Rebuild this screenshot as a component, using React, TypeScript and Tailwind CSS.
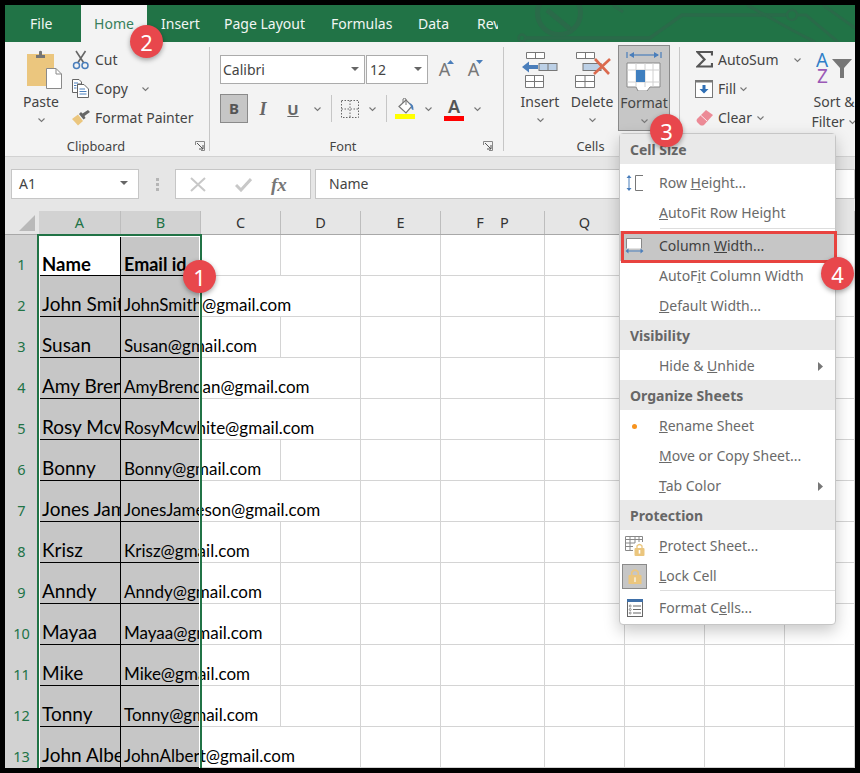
import React from "react";

const ui = "font-['Noto_Sans','Open_Sans',sans-serif]";

function Chev({ className = "" }: { className?: string }) {
  return (
    <svg width="9" height="6" viewBox="0 0 9 6" className={`shrink-0 ${className}`}>
      <path d="M1.5 1.5 L4.5 4.5 L7.5 1.5" fill="none" stroke="#777" strokeWidth="1.1" />
    </svg>
  );
}

function Caret() {
  return (
    <svg width="9" height="5" viewBox="0 0 9 5" className="shrink-0">
      <path d="M0 0 H8 L4 4 Z" fill="#666" />
    </svg>
  );
}

function Launcher({ gap }: { gap: number }) {
  return (
    <svg width="10" height="10" viewBox="0 0 10 10" className="shrink-0" style={{ marginLeft: gap }}>
      <path d="M0.5 4 V0.5 H9.5 V9.5 H6" fill="none" stroke="#888" />
      <path d="M2 2 L8 8 M8 4 V8 H4" fill="none" stroke="#555" />
    </svg>
  );
}

function PasteIcon() {
  return (
    <svg width="36" height="40" viewBox="0 0 36 40" className="ml-[8px]">
      <rect x="0" y="4" width="27" height="32" fill="#EBC67E" />
      <path d="M9 5 H12 V1.5 Q13.5 0 15 1.5 V5 H18 V8 H9 Z" fill="#757575" />
      <path d="M19.5 18.5 H29 L34.5 24 V38.5 H19.5 Z" fill="#fff" stroke="#8a8a8a" />
      <path d="M29 18.5 V24 H34.5" fill="none" stroke="#8a8a8a" />
    </svg>
  );
}

function ScissorsIcon() {
  return (
    <svg width="18" height="20" viewBox="0 0 18 20">
      <path d="M4 1 L11.5 12.5 M13.5 1 L6 12.5" stroke="#666" strokeWidth="1.6" fill="none" />
      <circle cx="4.5" cy="15.5" r="3" fill="none" stroke="#4a7ebb" strokeWidth="1.5" />
      <circle cx="13" cy="15.5" r="3" fill="none" stroke="#4a7ebb" strokeWidth="1.5" />
    </svg>
  );
}

function CopyIcon() {
  return (
    <svg width="18" height="19" viewBox="0 0 18 19">
      <path d="M0.5 0.5 H7 L9.5 3 V5 H5.5 V13.5 H0.5 Z" fill="#fff" stroke="#666" />
      <path d="M5.5 5.5 H12 L16.5 10 V18.5 H5.5 Z" fill="#fff" stroke="#666" />
      <path d="M2 4 H6 M2 6.5 H4.5 M2 9 H4.5 M7.5 10 H13 M7.5 12.5 H14.5 M7.5 15 H14.5" stroke="#4a7ebb" />
    </svg>
  );
}

function PainterIcon() {
  return (
    <svg width="19" height="16" viewBox="0 0 19 16">
      <path d="M0 9 L6 4.5 L11 11 L6 15.5 Q3 12 0 9 Z" fill="#EBC67E" />
      <path d="M7 4 L11.5 9.5 L13.5 8 L12.5 6 L18 2 L16 0 L10.5 3.5 L9 2 Z" fill="#666" />
    </svg>
  );
}

function BordersIcon() {
  return (
    <svg width="18" height="18" viewBox="0 0 18 18">
      <path d="M0.5 0.5 H17.5 V17.5 H0.5 Z M9 0.5 V17.5 M0.5 9 H17.5" fill="none" stroke="#666" strokeDasharray="1.5 1.5" />
    </svg>
  );
}

function FillIcon() {
  return (
    <svg width="20" height="22" viewBox="0 0 20 22">
      <path d="M4 8.5 L11 2 L17 8 L11 15 Z" fill="#fff" stroke="#777" strokeWidth="1.2" />
      <path d="M8 5 V1 Q9.5 -0.5 11 1 V7" fill="none" stroke="#777" />
      <path d="M14 5 Q19 6 18.5 12 Q16 12 16 8 Z" fill="#4a7ebb" />
      <rect x="0" y="16" width="20" height="5" fill="#ffff00" />
    </svg>
  );
}

function InsertIcon() {
  return (
    <svg width="36" height="36" viewBox="0 0 36 36">
      <path d="M4.5 0.5 H22.5 V6.5 H4.5 Z M13.5 0.5 V6.5" fill="#fff" stroke="#777" />
      <rect x="17" y="11.5" width="18" height="7" fill="#bcd0e6" stroke="#777" />
      <path d="M26 11.5 V18.5" stroke="#777" />
      <path d="M0 15 L7 9.5 V13 H16 V17 H7 V20.5 Z" fill="#4a7ebb" />
      <path d="M3.5 23.5 H21.5 V35.5 H3.5 Z M12.5 23.5 V35.5 M3.5 29.5 H21.5" fill="#fff" stroke="#777" />
    </svg>
  );
}

function DeleteIcon() {
  return (
    <svg width="38" height="36" viewBox="0 0 38 36" className="ml-[3px]">
      <path d="M1.5 0.5 H19.5 V6.5 H1.5 Z M10.5 0.5 V6.5" fill="#fff" stroke="#777" />
      <rect x="8" y="11.5" width="18" height="7" fill="#bcd0e6" stroke="#777" />
      <path d="M0.5 23.5 H19.5 V35.5 H0.5 Z M10 23.5 V35.5 M0.5 29.5 H19.5" fill="#fff" stroke="#777" />
      <path d="M20 7 L34 22 M35 7 L19 22" stroke="#DB6A4E" strokeWidth="2.6" />
    </svg>
  );
}

function FormatIcon() {
  return (
    <svg width="36" height="40" viewBox="0 0 36 40">
      <path d="M1 1 V7 M35 1 V7" stroke="#4a7ebb" strokeWidth="1.2" />
      <path d="M4 4 H32" stroke="#4a7ebb" strokeWidth="1.2" />
      <path d="M8 1 L3 4 L8 7 Z M28 1 L33 4 L28 7 Z" fill="#4a7ebb" />
      <path d="M1 12 H34 V36 L24 36 L21 40 L12 40 L10 36 L1 36 Z" fill="#fff" stroke="#888" />
      <path d="M1 19 H34 M1 31 H34 M10 12 V36 M19 12 V36 M27 12 V36" stroke="#d0d0d0" />
      <rect x="10" y="19" width="9" height="12" fill="#3f7fbf" />
    </svg>
  );
}

function SigmaIcon() {
  return (
    <svg width="17" height="17" viewBox="0 0 17 17">
      <path d="M16 4.5 V1 H1.5 L8.5 8.5 L1.5 15.5 H16 V12" fill="none" stroke="#555" strokeWidth="2.2" />
    </svg>
  );
}

function FillDownIcon() {
  return (
    <svg width="18" height="18" viewBox="0 0 18 18">
      <rect x="0.5" y="0.5" width="17" height="17" fill="#fff" stroke="#777" />
      <rect x="0.5" y="0.5" width="17" height="2" fill="#777" />
      <path d="M9 13.5 L4.5 9 H7.5 V5 H10.5 V9 H13.5 Z" fill="#2f6fb5" />
    </svg>
  );
}

function EraserIcon() {
  return (
    <svg width="17" height="16" viewBox="0 0 17 16">
      <path d="M10 0 L17 5 L8 15 Q6 16 4 15 L1 12 Q0 10 1 9 Z" fill="#EC8A96" />
      <path d="M4.5 5 L11 11" stroke="#fff" strokeWidth="0.8" />
    </svg>
  );
}

function SortIcon() {
  return (
    <svg width="37" height="33" viewBox="0 0 37 33" className="shrink-0">
      <text x="0" y="16" fontSize="19" fontFamily="'Noto Sans',sans-serif" fill="#2f7fc8">A</text>
      <text x="1" y="32" fontSize="19" fontFamily="'Noto Sans',sans-serif" fill="#9b59b6">Z</text>
      <path d="M16 8 H36 L28 17 V27 H24 V17 Z" fill="#777" />
    </svg>
  );
}

function MenuRowHeightIcon() {
  return (
    <svg width="18" height="18" viewBox="0 0 18 18">
      <path d="M3 2 V16" stroke="#4a7ebb" />
      <path d="M0.5 4 L3 1 L5.5 4 Z M0.5 14 L3 17 L5.5 14 Z" fill="#4a7ebb" />
      <path d="M17 1.5 H9.5 V16.5 H17" fill="none" stroke="#777" />
    </svg>
  );
}

function MenuColWidthIcon() {
  return (
    <svg width="19" height="16" viewBox="0 0 19 16">
      <rect x="1.5" y="0.5" width="15" height="10" fill="#fff" />
      <path d="M1.5 10.5 V0.5 H16.5 V10.5" fill="none" stroke="#888" />
      <path d="M2 13 H17" stroke="#4a7ebb" />
      <path d="M3.5 10.5 L0.5 13 L3.5 15.5 Z M15.5 10.5 L18.5 13 L15.5 15.5 Z" fill="#4a7ebb" />
    </svg>
  );
}

function MenuLock({ size = 16 }: { size?: number }) {
  return (
    <svg width={size} height={size * 1.2} viewBox="0 0 15 18">
      <path d="M4 8 V4.5 Q7.5 0 11 4.5 V8" fill="none" stroke="#EBC67E" strokeWidth="1.8" />
      <rect x="0.5" y="7.5" width="14" height="10" rx="1" fill="#EBC67E" />
      <rect x="6.5" y="10" width="2" height="5" fill="#fff" opacity="0.6" />
    </svg>
  );
}

function ProtectIcon() {
  return (
    <svg width="20" height="20" viewBox="0 0 20 20" className="shrink-0">
      <path d="M0.5 0.5 H17.5 V6 M0.5 0.5 V14.5 H8 M0.5 3.5 H17.5 M0.5 7 H10 M0.5 10.5 H8 M5 0.5 V14.5 M10 0.5 V7 M14 0.5 V6" fill="none" stroke="#888" />
      <g transform="translate(9.5,7)">
        <path d="M2.5 5 V3 Q5 0 7.5 3 V5" fill="none" stroke="#EBC67E" strokeWidth="1.3" />
        <rect x="0" y="5" width="10" height="8" rx="1" fill="#EBC67E" />
        <rect x="4.2" y="7" width="1.6" height="3.6" fill="#fff" />
      </g>
    </svg>
  );
}

function FormatCellsIcon() {
  return (
    <svg width="16" height="18" viewBox="0 0 16 18">
      <rect x="0.5" y="0.5" width="15" height="17" fill="#fff" stroke="#666" />
      <rect x="0" y="0" width="16" height="3" fill="#3e6fa8" />
      <path d="M6 7 H14 M6 10.5 H14 M6 14 H14" stroke="#666" />
      <circle cx="3.2" cy="7" r="1" fill="none" stroke="#666" strokeWidth="0.7" />
      <circle cx="3.2" cy="10.5" r="1" fill="none" stroke="#666" strokeWidth="0.7" />
      <circle cx="3.2" cy="14" r="1" fill="none" stroke="#666" strokeWidth="0.7" />
    </svg>
  );
}

function CircuitPattern() {
  return (
    <svg className="pointer-events-none absolute left-[485px] top-0" width="365" height="37" viewBox="0 0 365 37">
      <g fill="none" stroke="#2a6a49">
        <circle cx="69" cy="8" r="21.5" strokeWidth="5" />
        <path d="M57 5 L80 24" strokeWidth="5" />
        <circle cx="32" cy="33" r="3.5" strokeWidth="2.5" />
        <path d="M36 33 H160 L192 10 H297" strokeWidth="3.5" />
        <circle cx="302" cy="10" r="5" strokeWidth="2.5" />
        <path d="M307 10 H316 L348 37" strokeWidth="3" />
        <path d="M257 0 L302 25 L325 37" strokeWidth="3" />
        <path d="M333 0 L365 23" strokeWidth="3" />
        <path d="M123 0 L133 7" strokeWidth="3" />
      </g>
    </svg>
  );
}

const tabs: [string, number][] = [["Insert", 63], ["Page Layout", 107], ["Formulas", 87], ["Data", 59], ["Rev", 21]];

function TabBar() {
  return (
    <div className="relative flex h-[37px] shrink-0 overflow-hidden bg-[#217346] text-[14px] leading-[37px] text-[#f1f6f3]">
      <CircuitPattern />
      <div className="relative w-[76px] shrink-0 pl-[25px]">File</div>
      <div className="relative mr-[14px] w-[66px] shrink-0 bg-[#f3f3f3] text-center text-[#387f5c]">Home</div>
      {tabs.map(([t, w]) => (
        <div key={t} className="relative shrink-0 overflow-hidden" style={{ width: w }}>{t}</div>
      ))}
    </div>
  );
}

function Group({ label, width, labelWidth, launcherGap, children, last }: { label?: string; width?: number; labelWidth?: number; launcherGap?: number; children: React.ReactNode; last?: boolean }) {
  return (
    <div className={`flex h-[104px] flex-col ${last ? "flex-1 overflow-hidden" : "shrink-0 border-r border-[#c6c6c6]"}`} style={{ width }}>
      <div className="flex h-[90px] shrink-0">{children}</div>
      {label && (
        <div className="flex h-[18px] shrink-0 items-center text-[12.8px] leading-[18px] text-[#444]">
          <span className="text-center" style={{ width: labelWidth }}>{label}</span>
          {launcherGap !== undefined && <Launcher gap={launcherGap} />}
        </div>
      )}
    </div>
  );
}

function BigButton({ icon, label, active }: { icon: React.ReactNode; label: string; active?: boolean }) {
  return (
    <div className={`-mt-[2px] flex h-[86px] w-[52px] shrink-0 flex-col items-center text-[14px] text-[#444] ${active ? "border border-[#8a8a8a] bg-[#c6c6c6]" : ""}`}>
      <div className="flex h-[47px] shrink-0 items-center justify-center pt-[3px]">{icon}</div>
      <div className="h-[20px] shrink-0 whitespace-nowrap leading-[20px]">{label}</div>
      <Chev className="mt-[5px]" />
    </div>
  );
}

function SmallRow({ icon, label, chevGap, iconWidth }: { icon: React.ReactNode; label: string; chevGap?: number; iconWidth: number }) {
  return (
    <div className="flex h-[29px] items-center whitespace-nowrap text-[14px] text-[#444]">
      <div className="flex shrink-0 items-center" style={{ width: iconWidth }}>{icon}</div>
      <span>{label}</span>
      {chevGap !== undefined && <span className="flex" style={{ marginLeft: chevGap }}><Chev /></span>}
    </div>
  );
}

function Slot({ w, children }: { w: number; children?: React.ReactNode }) {
  return <div className="flex h-[29px] shrink-0 items-center justify-center" style={{ width: w }}>{children}</div>;
}

function Divider() {
  return <div className="h-[27px] w-px bg-[#c6c6c6]" />;
}

function GrowFont({ down, className = "" }: { down?: boolean; className?: string }) {
  return (
    <div className={`flex w-[29px] shrink-0 items-start justify-center pt-[2px] text-[18px] leading-[24px] text-[#777] ${className}`}>
      <span>A</span>
      <svg className="-ml-[3px] mt-[3px] shrink-0" width="7" height="4">
        <path d={down ? "M0 0 L3.5 4 L7 0 Z" : "M0 4 L3.5 0 L7 4 Z"} fill="#4a7ebb" />
      </svg>
    </div>
  );
}

function Ribbon() {
  return (
    <div className="flex h-[115px] shrink-0 overflow-hidden border-b border-[#d2d2d2] bg-[#f3f3f3] pt-[5px]">
      <Group label="Clipboard" width={205} labelWidth={182} launcherGap={8}>
        <div className="flex pl-[10px]">
          <BigButton icon={<PasteIcon />} label="Paste" />
          <div className="-mt-[2px] flex flex-col pl-[5px]">
            <SmallRow iconWidth={23} icon={<ScissorsIcon />} label="Cut" />
            <SmallRow iconWidth={23} icon={<CopyIcon />} label="Copy" chevGap={13} />
            <SmallRow iconWidth={23} icon={<PainterIcon />} label="Format Painter" />
          </div>
        </div>
      </Group>

      <Group label="Font" width={294} labelWidth={266} launcherGap={7}>
        <div className="flex flex-col gap-[10px] pl-[10px] pt-[8px]">
          <div className="flex h-[29px] items-stretch">
            <div className="flex w-[145px] shrink-0 items-center justify-between border border-[#ababab] bg-white pl-[2px] pr-[4px] text-[14px] text-[#444]">
              <span>Calibri</span><Caret />
            </div>
            <div className="ml-px flex w-[62px] shrink-0 items-center justify-between border border-[#ababab] bg-white pl-[3px] pr-[4px] text-[14px] text-[#444]">
              <span>12</span><Caret />
            </div>
            <GrowFont className="ml-[4px]" />
            <GrowFont down />
          </div>
          <div className="flex h-[29px] items-center">
            <div className="flex h-[29px] w-[28px] shrink-0 items-center justify-center border border-[#8a8a8a] bg-[#c6c6c6] text-[15px] font-bold text-[#555]">B</div>
            <Slot w={30}><span className="font-['Liberation_Serif',serif] text-[18px] font-bold italic leading-[22px] text-[#666]">I</span></Slot>
            <Slot w={30}><span className="text-[15px] font-bold leading-[22px] text-[#666] underline">U</span></Slot>
            <Slot w={18}><Chev /></Slot>
            <Slot w={10}><Divider /></Slot>
            <Slot w={27}><BordersIcon /></Slot>
            <Slot w={18}><Chev /></Slot>
            <Slot w={10}><Divider /></Slot>
            <Slot w={28}><FillIcon /></Slot>
            <Slot w={18}><Chev /></Slot>
            <div className="flex h-[29px] w-[34px] shrink-0 flex-col items-center justify-center">
              <span className="text-[18px] font-semibold leading-[19px] text-[#555]">A</span>
              <span className="h-[5px] w-[20px] bg-[#ff0000]" />
            </div>
            <Slot w={12}><Chev /></Slot>
          </div>
        </div>
      </Group>

      <Group label="Cells" width={176} labelWidth={173}>
        <div className="flex pl-[10px]">
          <BigButton icon={<InsertIcon />} label="Insert" />
          <BigButton icon={<DeleteIcon />} label="Delete" />
          <BigButton icon={<FormatIcon />} label="Format" active />
        </div>
      </Group>

      <Group last>
        <div className="-mt-[2px] flex pl-[15px]">
          <div className="flex w-[110px] shrink-0 flex-col">
            <SmallRow iconWidth={23} icon={<span className="flex pl-px"><SigmaIcon /></span>} label="AutoSum" chevGap={14} />
            <SmallRow iconWidth={23} icon={<FillDownIcon />} label="Fill" chevGap={3} />
            <SmallRow iconWidth={23} icon={<span className="flex pl-px"><EraserIcon /></span>} label="Clear" chevGap={4} />
          </div>
          <div className="flex w-[58px] shrink-0 flex-col items-center whitespace-nowrap pt-[6px] text-[14px] leading-[20px] text-[#444]">
            <SortIcon />
            <span className="mt-[8px]">Sort &amp;</span>
            <div className="flex items-center gap-[3px]"><span>Filter</span><Chev /></div>
          </div>
        </div>
      </Group>
    </div>
  );
}

function FormulaBar() {
  return (
    <div className="flex h-[54px] shrink-0 items-start gap-[4px] bg-[#e6e6e6] pl-[6px] pt-[12px]">
      <div className="flex h-[30px] w-[128px] items-center justify-between border border-[#c6c6c6] bg-white pb-px pl-[7px] pr-[9px] text-[14px] text-[#444]">
        <span>A1</span><Caret />
      </div>
      <div className="flex h-[30px] w-[28px] flex-col items-center justify-center gap-[2px]">
        <span className="h-[3px] w-[3px] bg-[#b5b5b5]" />
        <span className="h-[3px] w-[3px] bg-[#b5b5b5]" />
        <span className="h-[3px] w-[3px] bg-[#b5b5b5]" />
      </div>
      <div className="flex h-[30px] w-[136px] items-center border border-[#c6c6c6] bg-white">
        <svg className="ml-[14px]" width="16" height="15" viewBox="0 0 16 15"><path d="M1 1 L15 14 M15 1 L1 14" stroke="#c8c8c8" strokeWidth="2" /></svg>
        <svg className="ml-[29px]" width="17" height="15" viewBox="0 0 17 15"><path d="M1 8 L6 13 L16 2" fill="none" stroke="#c8c8c8" strokeWidth="3" /></svg>
        <span className="ml-[19px] font-['Liberation_Serif',serif] text-[19px] font-bold italic leading-none text-[#777]">fx</span>
      </div>
      <div className="flex h-[30px] flex-1 items-center border border-[#c6c6c6] bg-white pb-px pl-[13px] text-[14px] text-[#444]">Name</div>
    </div>
  );
}

const colWidths = [82, 80, 80, 80, 80, 104, 80, 80, 80, 70];

function ColumnHeaders() {
  const labels = ["A", "B", "C", "D", "E", "", "Q", "", "", ""];
  return (
    <div className="flex h-[24px] shrink-0 border-b border-[#a8a8a8] bg-[#e6e6e6] text-[14.5px] text-[#333]">
      <div className="flex w-[34px] shrink-0 items-end justify-end pb-[3px] pr-[4px]">
        <svg width="16" height="16"><path d="M16 0 V16 H0 Z" fill="#b9b9b9" /></svg>
      </div>
      {colWidths.map((w, i) => (
        <div
          key={i}
          className={`flex shrink-0 items-center justify-center border-r border-[#bdbdbd] ${i < 2 ? "bg-[#d2d2d2] text-[#217346]" : ""}`}
          style={{ width: w }}
        >
          {i === 5 ? (
            <span className="flex gap-[16px]"><span>F</span><span>P</span></span>
          ) : labels[i]}
        </div>
      ))}
    </div>
  );
}

type Row = { name: string; email: string; noC?: boolean };
const rows: Row[] = [
  { name: "John Smith", email: "JohnSmith@gmail.com", noC: true },
  { name: "Susan", email: "Susan@gmail.com" },
  { name: "Amy Brendan", email: "AmyBrendan@gmail.com", noC: true },
  { name: "Rosy Mcwhite", email: "RosyMcwhite@gmail.com", noC: true },
  { name: "Bonny", email: "Bonny@gmail.com" },
  { name: "Jones Jameson", email: "JonesJameson@gmail.com", noC: true },
  { name: "Krisz", email: "Krisz@gmail.com" },
  { name: "Anndy", email: "Anndy@gmail.com" },
  { name: "Mayaa", email: "Mayaa@gmail.com" },
  { name: "Mike", email: "Mike@gmail.com" },
  { name: "Tonny", email: "Tonny@gmail.com" },
  { name: "John Albert", email: "JohnAlbert@gmail.com", noC: true },
];

const cellFont = "font-['Lato','Noto_Sans',sans-serif]";

function EmptyCells({ noC }: { noC?: boolean }) {
  return (
    <>
      {colWidths.slice(2).map((w, i) => (
        <div
          key={i}
          className={`shrink-0 border-b border-[#d4d4d4] ${i === 0 && noC ? "" : "border-r"}`}
          style={{ width: w }}
        />
      ))}
    </>
  );
}

function RowHead({ n }: { n: number }) {
  return (
    <div className="flex w-[34px] shrink-0 items-end justify-center bg-[#d2d2d2] pb-[1px] pr-[1px] text-[14.5px] leading-[22px] text-[#217346]">
      {n}
    </div>
  );
}

function Sheet() {
  return (
    <div className="relative flex-1 overflow-hidden bg-white">
      <ColumnHeaders />
      <div className="flex h-[41px]">
        <RowHead n={1} />
        <div className={`flex w-[82px] shrink-0 items-end overflow-hidden border-r border-b border-black bg-white pl-[3px] text-[18.5px] font-bold leading-[22px] text-black ${cellFont}`}>Name</div>
        <div className={`flex w-[80px] shrink-0 items-end whitespace-nowrap border-b border-black bg-[#c6c6c6] pl-[3px] text-[18px] font-bold leading-[22px] text-black ${cellFont}`}>Email id</div>
        <EmptyCells />
      </div>
      {rows.map((r, i) => (
        <div key={r.name} className="flex h-[41px]">
          <RowHead n={i + 2} />
          <div className={`flex w-[82px] shrink-0 items-end overflow-hidden whitespace-nowrap border-r border-b border-black bg-[#c6c6c6] pl-[3px] text-[19px] leading-[24px] text-black ${cellFont}`}>{r.name}</div>
          <div className={`flex w-[80px] shrink-0 items-end whitespace-nowrap border-b border-black bg-[#c6c6c6] pl-[3px] text-[17px] leading-[22px] text-black ${cellFont}`}>{r.email}</div>
          <EmptyCells noC={r.noC} />
        </div>
      ))}
      <div className="pointer-events-none absolute left-[32px] top-[23px] h-[600px] w-[165px] border-2 border-[#217346]">
        <div className="h-full w-full border border-white" />
      </div>
    </div>
  );
}

function Item({ children, icon, arrow, className = "" }: { children: React.ReactNode; icon?: React.ReactNode; arrow?: boolean; className?: string }) {
  return (
    <div className={`flex h-[30px] items-center whitespace-nowrap text-[14px] text-[#6a6a6a] ${className}`}>
      <div className="mr-[10px] flex h-full w-[29px] shrink-0 items-center justify-center">{icon}</div>
      <span className="pb-[2px]">{children}</span>
      {arrow && <svg className="ml-auto mr-[12px] shrink-0" width="5" height="9"><path d="M0 0 L5 4.5 L0 9 Z" fill="#777" /></svg>}
    </div>
  );
}

function Head({ children, first }: { children: React.ReactNode; first?: boolean }) {
  return <div className={`flex h-[30px] items-center bg-[#e9e9e9] pl-[10px] text-[14px] font-bold text-[#666] ${first ? "" : "-mt-px mb-px"}`}>{children}</div>;
}

function Menu() {
  return (
    <div className="absolute left-[614px] top-[128px] h-[492px] w-[217px] rounded-[4px] border border-[#c6c6c6] bg-white shadow-[0_6px_16px_rgba(0,0,0,0.22)]">
      <Head first>Cell Size</Head>
      <div className="h-[4px]" />
      <Item icon={<MenuRowHeightIcon />}>Row <u>H</u>eight...</Item>
      <Item><u>A</u>utoFit Row Height</Item>
      <div className="ml-[40px] h-px bg-[#dddddd]" />
      <div className="relative mt-[2px] h-[30px]">
        <Item icon={<MenuColWidthIcon />} className="bg-[#c6c6c6] text-[#404040]">Column <u>W</u>idth...</Item>
        <div className="absolute left-px top-0 h-[32px] w-[216px] border-[3px] border-[#e8433f]" />
      </div>
      <Item>AutoF<u>i</u>t Column Width</Item>
      <Item><u>D</u>efault Width...</Item>
      <Head>Visibility</Head>
      <Item arrow>Hide &amp; <u>U</u>nhide</Item>
      <Head>Organize Sheets</Head>
      <Item icon={<span className="block h-[5px] w-[5px] rounded-full bg-[#f7931e]" />}><u>R</u>ename Sheet</Item>
      <Item><u>M</u>ove or Copy Sheet...</Item>
      <Item arrow><u>T</u>ab Color</Item>
      <Head>Protection</Head>
      <Item icon={<ProtectIcon />}><u>P</u>rotect Sheet...</Item>
      <Item icon={<div className="flex h-[25px] w-[25px] shrink-0 items-center justify-center border border-[#8a8a8a] bg-[#c6c6c6]"><MenuLock size={14} /></div>}><u>L</u>ock Cell</Item>
      <div className="-mt-px ml-[40px] h-px bg-[#dddddd]" />
      <Item icon={<FormatCellsIcon />} className="mt-[2px]">Format C<u>e</u>lls...</Item>
    </div>
  );
}

function Badge({ n, x, y }: { n: number; x: number; y: number }) {
  return (
    <div
      className="absolute flex h-[33px] w-[33px] items-center justify-center rounded-full bg-[#e8474c] text-[22px] leading-none text-white shadow-[0_2px_5px_rgba(0,0,0,0.35)]"
      style={{ left: x - 5 - 16, top: y - 5 - 16 }}
    >
      {n}
    </div>
  );
}

export default function App() {
  return (
    <div className="h-[773px] w-[860px] bg-black p-[5px]">
      <div className={`relative flex h-[763px] w-[850px] flex-col overflow-hidden bg-white ${ui}`}>
        <TabBar />
        <Ribbon />
        <FormulaBar />
        <Sheet />
        <Menu />
        <Badge n={1} x={199} y={276} />
        <Badge n={2} x={146} y={41} />
        <Badge n={3} x={666} y={130} />
        <Badge n={4} x={837} y={273} />
      </div>
    </div>
  );
}
